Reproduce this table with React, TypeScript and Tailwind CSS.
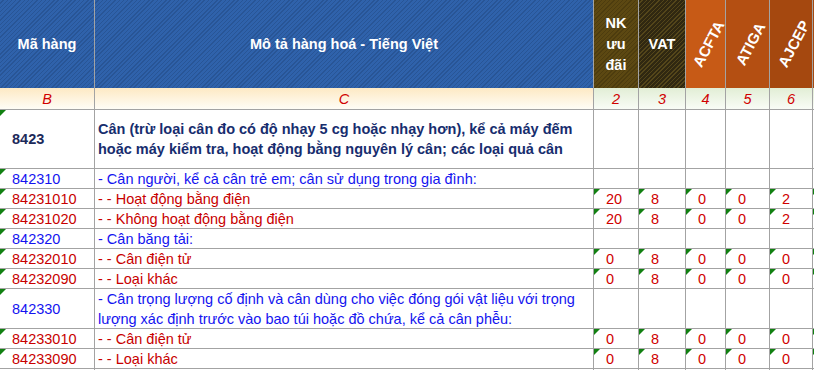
import React from 'react';

type Row = {
  code: string;
  desc: string[];
  kind: 'head' | 'sub' | 'item' | 'blank';
  vals?: string[];
  h: string;
};

const rows: Row[] = [
  {
    code: '8423',
    desc: [
      'Cân (trừ loại cân đo có độ nhạy 5 cg hoặc nhạy hơn), kể cả máy đếm',
      'hoặc máy kiểm tra, hoạt động bằng nguyên lý cân; các loại quả cân',
    ],
    kind: 'head',
    h: 'h-[59px]',
  },
  { code: '842310', desc: ['- Cân người, kể cả cân trẻ em; cân sử dụng trong gia đình:'], kind: 'sub', h: 'h-[20px]' },
  { code: '84231010', desc: ['- - Hoạt động bằng điện'], kind: 'item', vals: ['20', '8', '0', '0', '2'], h: 'h-[20px]' },
  { code: '84231020', desc: ['- - Không hoạt động bằng điện'], kind: 'item', vals: ['20', '8', '0', '0', '2'], h: 'h-[20px]' },
  { code: '842320', desc: ['- Cân băng tải:'], kind: 'sub', h: 'h-[20px]' },
  { code: '84232010', desc: ['- - Cân điện tử'], kind: 'item', vals: ['0', '8', '0', '0', '0'], h: 'h-[20px]' },
  { code: '84232090', desc: ['- - Loại khác'], kind: 'item', vals: ['0', '8', '0', '0', '0'], h: 'h-[20px]' },
  {
    code: '842330',
    desc: [
      '- Cân trọng lượng cố định và cân dùng cho việc đóng gói vật liệu với trọng',
      'lượng xác định trước vào bao túi hoặc đồ chứa, kể cả cân phễu:',
    ],
    kind: 'sub',
    h: 'h-[40px]',
  },
  { code: '84233010', desc: ['- - Cân điện tử'], kind: 'item', vals: ['0', '8', '0', '0', '0'], h: 'h-[20px]' },
  { code: '84233090', desc: ['- - Loại khác'], kind: 'item', vals: ['0', '8', '0', '0', '0'], h: 'h-[20px]' },
  { code: '', desc: [], kind: 'blank', h: 'h-[20px]' },
];

const cols = 'grid grid-cols-[95px_499px_45px_47px_40px_44px_43px_1fr]';
const cell = 'relative border-r border-b border-[#a3a3a3] flex items-center overflow-hidden';

function Flag() {
  return (
    <span className="absolute left-0 top-0 w-[6px] h-[6px] bg-[#118011] [clip-path:polygon(0_0,100%_0,0_100%)]" />
  );
}

function Rotated({ label }: { label: string }) {
  return (
    <span className="inline-block -rotate-[62deg] translate-x-[3px] font-bold text-[15px] text-white whitespace-nowrap">
      {label}
    </span>
  );
}

export default function App() {
  const blue =
    'bg-[repeating-linear-gradient(135deg,#2f62ab_0px,#2f62ab_2px,#285596_2px,#285596_3px)]';

  return (
    <div className="w-[814px] h-[370px] overflow-hidden bg-white font-['Liberation_Sans',Arial,sans-serif] text-[14.5px] leading-[20px]">
      {/* header */}
      <div className={`${cols} h-[88px]`}>
        <div className={`${blue} border-r border-[#a3a3a3] flex items-center justify-center text-white font-bold`}>
          Mã hàng
        </div>
        <div className={`${blue} border-r border-[#a3a3a3] flex items-center justify-center text-white font-bold`}>
          Mô tả hàng hoá - Tiếng Việt
        </div>
        <div className="bg-[repeating-linear-gradient(135deg,#5c4812_0px,#5c4812_2px,#4d3c0e_2px,#4d3c0e_3px)] border-r border-[#a3a3a3] flex items-center justify-center text-center text-white font-bold leading-[21px]">
          NK
          <br />
          ưu
          <br />
          đãi
        </div>
        <div className="bg-[repeating-linear-gradient(135deg,#302811_0px,#302811_2px,#54461a_2px,#54461a_3px)] border-r border-[#a3a3a3] flex items-center justify-center text-white font-bold">
          VAT
        </div>
        <div className="bg-[#c75a16] border-r border-[#a3a3a3] flex items-center justify-center">
          <Rotated label="ACFTA" />
        </div>
        <div className="bg-[#b44f12] border-r border-[#a3a3a3] flex items-center justify-center">
          <Rotated label="ATIGA" />
        </div>
        <div className="bg-[#a5480f] border-r border-[#a3a3a3] flex items-center justify-center">
          <Rotated label="AJCEP" />
        </div>
        <div className="bg-[#a5480f]" />
      </div>

      {/* column letters */}
      <div className={`${cols} h-[22px] italic text-[#d00000]`}>
        <div className={`${cell} justify-center bg-gradient-to-b from-[#fde9c4] to-[#fffdf6]`}>B</div>
        <div className={`${cell} justify-center bg-gradient-to-b from-[#fde9c4] to-[#fffdf6]`}>C</div>
        {['2', '3', '4', '5', '6'].map((n) => (
          <div key={n} className={`${cell} justify-center bg-gradient-to-b from-[#e2eed6] to-[#f9fcf6]`}>
            {n}
          </div>
        ))}
        <div className={`${cell} border-r-0 bg-gradient-to-b from-[#e2eed6] to-[#f9fcf6]`} />
      </div>

      {/* body */}
      {rows.map((r, i) => {
        const codeColor =
          r.kind === 'head' ? 'text-[#1c2a5a] font-bold' : r.kind === 'sub' ? 'text-[#1414f0]' : 'text-[#c80000]';
        const descColor =
          r.kind === 'head' ? 'text-[#172d6e] font-bold' : r.kind === 'sub' ? 'text-[#1414f0]' : 'text-[#c80000]';
        return (
          <div key={i} className={`${cols} ${r.h}`}>
            <div className={`${cell} pl-3 ${codeColor}`}>
              {r.kind !== 'blank' && <Flag />}
              {r.code}
            </div>
            <div className={`${cell} pl-[3px] ${descColor}`}>
              <div className="whitespace-nowrap">
                {r.desc.map((line, j) => (
                  <div key={j}>{line}</div>
                ))}
              </div>
            </div>
            {[0, 1, 2, 3, 4].map((k) => (
              <div key={k} className={`${cell} pl-3 text-[#d00000]`}>
                {r.vals && <Flag />}
                {r.vals ? r.vals[k] : ''}
              </div>
            ))}
            <div className={`${cell} border-r-0`}>{r.vals && <Flag />}</div>
          </div>
        );
      })}
    </div>
  );
}
